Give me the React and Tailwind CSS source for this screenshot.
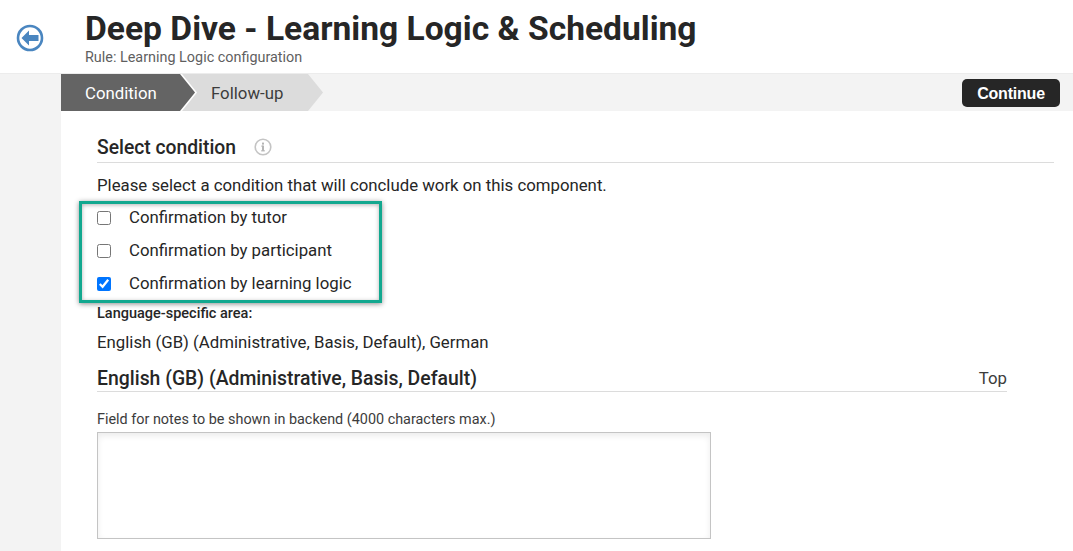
export default function App() {
  const options = [
    ["Confirmation by tutor", false],
    ["Confirmation by participant", false],
    ["Confirmation by learning logic", true],
  ];
  return (
    <div className="w-[1073px] h-[551px] overflow-hidden bg-white text-[#262626] font-['Roboto',sans-serif] flex flex-col">
      <header className="h-[73px] shrink-0 flex bg-white">
        <div className="w-[61px] shrink-0 pt-[23.5px] pl-[15.5px]">
          <svg width="28" height="28" viewBox="0 0 28 28">
            <circle cx="14" cy="14" r="12" fill="none" stroke="#4a86c0" strokeWidth="2.6" />
            <path d="M5.5 14 L13 6.5 V11 H22.5 V17 H13 V21.5 Z" fill="#4a86c0" />
          </svg>
        </div>
        <div className="pl-[24px] pt-[11px]">
          <h1 className="text-[33.6px] leading-[36px] font-bold whitespace-nowrap">Deep Dive - Learning Logic &amp; Scheduling</h1>
          <p className="text-[14.4px] leading-[16px] mt-[3px] text-[#5f5f5f]">Rule: Learning Logic configuration</p>
        </div>
      </header>
      <div className="flex-1 flex bg-[#f3f3f3] border-t border-[#ececec]">
        <div className="w-[61px] shrink-0" />
        <div className="flex-1 flex flex-col min-w-0">
          <nav className="h-[37px] shrink-0 flex items-center pr-[13px]">
            <div className="flex h-full">
              <div className="w-[136px] -mr-[15px] z-10 h-full bg-white [clip-path:polygon(0_0,121px_0,136px_50%,121px_100%,0_100%)]">
                <div className="w-[134px] h-full bg-[#646464] text-white text-[16.8px] pl-[24px] pt-[2px] flex items-center [clip-path:polygon(0_0,119px_0,134px_50%,119px_100%,0_100%)]">Condition</div>
              </div>
              <div className="w-[141px] h-full bg-[#dcdcdc] text-[#3c3c3c] text-[16.8px] pl-[29px] pt-[2px] flex items-center [clip-path:polygon(0_0,126px_0,141px_50%,126px_100%,0_100%)]">Follow-up</div>
            </div>
            <button className="ml-auto h-[28px] w-[98px] pt-[2px] rounded-[5px] bg-[#262626] text-white text-[16px] tracking-[-0.2px] font-bold font-['Liberation_Sans',sans-serif]">Continue</button>
          </nav>
          <main className="flex-1 bg-white pl-[36px] pr-[19px] min-h-0">
            <div className="h-[52px] pt-[26px] border-b border-[#dcdcdc] flex items-start">
              <h2 className="text-[19.3px] leading-[22px] font-medium">Select condition</h2>
              <svg className="ml-[18px] mt-[1px]" width="18" height="18" viewBox="0 0 18 18">
                <circle cx="9" cy="9" r="7.8" fill="none" stroke="#c4c4c4" strokeWidth="1.6" />
                <rect x="8" y="7.6" width="2" height="5.2" fill="#b5b5b5" />
                <rect x="7.2" y="12.2" width="3.6" height="1.2" fill="#b5b5b5" />
                <rect x="7.2" y="7.6" width="2" height="1" fill="#b5b5b5" />
                <rect x="8" y="4.6" width="2" height="2" fill="#b5b5b5" />
              </svg>
            </div>
            <p className="text-[16.8px] leading-[20px] mt-[12px]">Please select a condition that will conclude work on this component.</p>
            <div className="relative mt-[6px] h-[99px] flex flex-col">
              {options.map(([label, checked]) => (
                <label key={label} className="h-[33px] flex items-center text-[16.8px]">
                  <input type="checkbox" defaultChecked={checked} className="w-[14px] h-[14px] m-0 mt-[1px] accent-[#0075ff]" />
                  <span className="ml-[18px]">{label}</span>
                </label>
              ))}
              <div className="absolute left-[-18px] top-0 w-[303px] h-[102px] border-[3px] border-[#12a88f] shadow-[0_1px_5px_rgba(0,0,0,0.45),inset_0_1px_4px_rgba(0,0,0,0.3)] pointer-events-none" />
            </div>
            <p className="text-[14.5px] leading-[16px] font-medium mt-[6px]">Language-specific area:</p>
            <p className="text-[16.8px] leading-[20px] mt-[10px]">English (GB) (Administrative, Basis, Default), German</p>
            <div className="mt-[8px] w-[910px] h-[32px] pt-[6px] border-b border-[#dcdcdc] flex items-center justify-between">
              <h3 className="text-[19.4px] font-medium">English (GB) (Administrative, Basis, Default)</h3>
              <span className="text-[16.8px] text-[#3c3c3c]">Top</span>
            </div>
            <label className="block text-[14.4px] leading-[16px] mt-[20px] text-[#3c3c3c]">Field for notes to be shown in backend (4000 characters max.)</label>
            <textarea className="block mt-[4px] w-[614px] h-[107px] border border-[#c4c4c4] shadow-[inset_0_3px_6px_rgba(0,0,0,0.08)] outline-none resize-none" />
          </main>
        </div>
      </div>
    </div>
  );
}
